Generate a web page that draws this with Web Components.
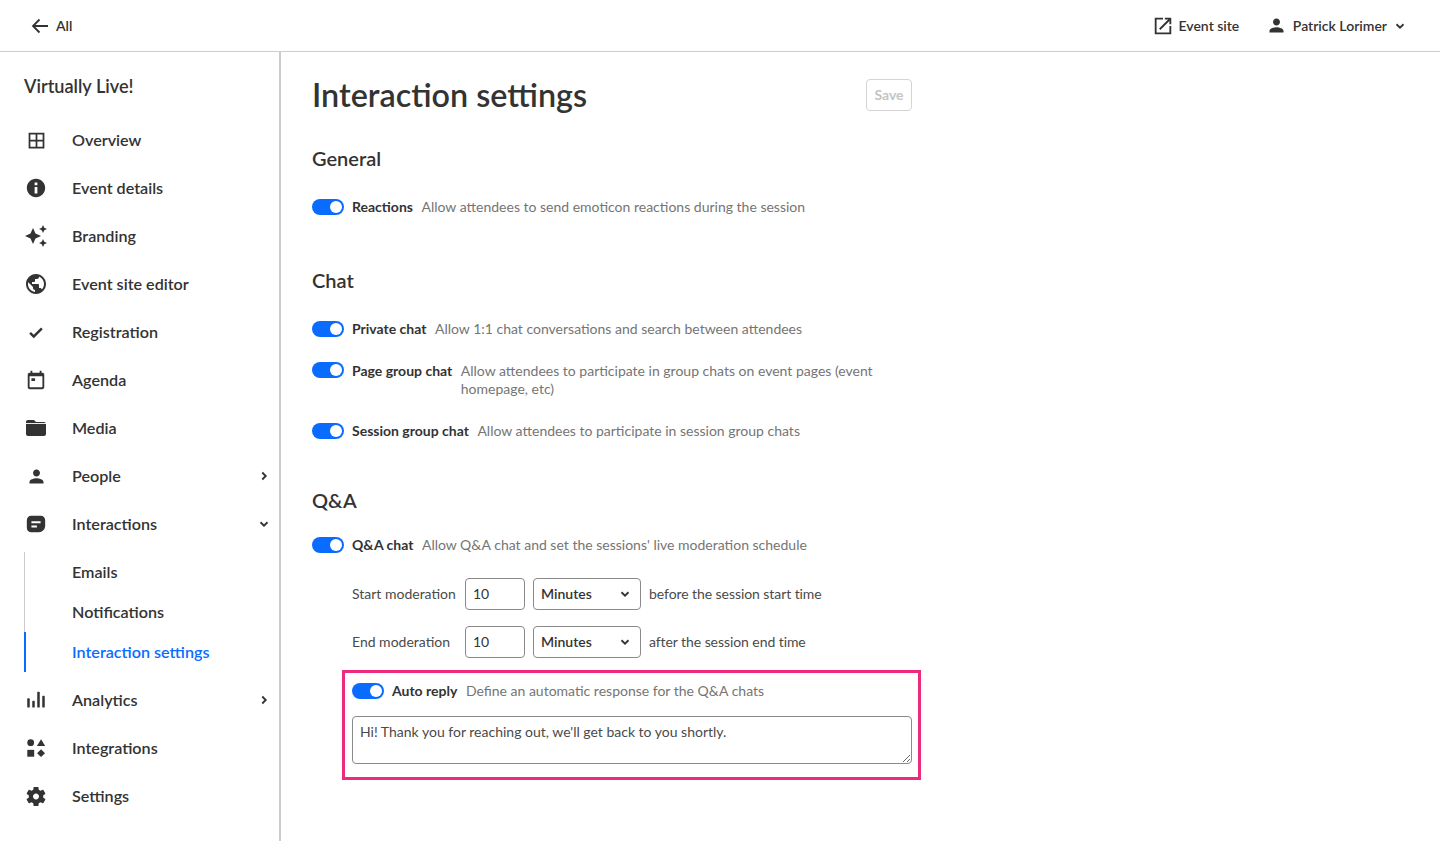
<!DOCTYPE html>
<html lang="en">
<head>
<meta charset="utf-8">
<title>Interaction settings</title>
<style>
  html, body { margin: 0; height: 100%; background: #fff; overflow: hidden; }
  body { font-family: Lato, "Open Sans", sans-serif; color: #333; }
</style>
</head>
<body>
<app-shell>
  <top-bar slot="top"></top-bar>
  <side-nav slot="side" title="Virtually Live!">
    <nav-item icon="overview">Overview</nav-item>
    <nav-item icon="info">Event details</nav-item>
    <nav-item icon="branding">Branding</nav-item>
    <nav-item icon="globe">Event site editor</nav-item>
    <nav-item icon="check">Registration</nav-item>
    <nav-item icon="agenda">Agenda</nav-item>
    <nav-item icon="media">Media</nav-item>
    <nav-item icon="person" chevron="right">People</nav-item>
    <nav-item icon="chat" chevron="down">Interactions</nav-item>
    <sub-nav>
      <sub-item>Emails</sub-item>
      <sub-item>Notifications</sub-item>
      <sub-item active>Interaction settings</sub-item>
    </sub-nav>
    <nav-item icon="analytics" chevron="right">Analytics</nav-item>
    <nav-item icon="integrations">Integrations</nav-item>
    <nav-item icon="settings">Settings</nav-item>
  </side-nav>
  <settings-page title="Interaction settings">
    <settings-section title="General" style="--after:28px">
      <toggle-row label="Reactions">Allow attendees to send emoticon reactions during the session</toggle-row>
    </settings-section>
    <settings-section title="Chat" style="--after:24px">
      <toggle-row label="Private chat">Allow 1:1 chat conversations and search between attendees</toggle-row>
      <toggle-row label="Page group chat" multi>Allow attendees to participate in group chats on event pages (event homepage, etc)</toggle-row>
      <toggle-row label="Session group chat">Allow attendees to participate in session group chats</toggle-row>
    </settings-section>
    <settings-section title="Q&amp;A" style="--head-gap:24px">
      <toggle-row label="Q&amp;A chat">Allow Q&amp;A chat and set the sessions' live moderation schedule</toggle-row>
      <moderation-row label="Start moderation" suffix="before the session start time"></moderation-row>
      <moderation-row label="End moderation" suffix="after the session end time"></moderation-row>
      <auto-reply message="Hi! Thank you for reaching out, we'll get back to you shortly."></auto-reply>
    </settings-section>
  </settings-page>
</app-shell>

<script>
const icons = {
  overview: '<path d="M3 3v18h18V3H3zm8 16H5v-6h6v6zm0-8H5V5h6v6zm8 8h-6v-6h6v6zm0-8h-6V5h6v6z"/>',
  info: '<path d="M12 2C6.48 2 2 6.48 2 12s4.48 10 10 10 10-4.48 10-10S17.52 2 12 2zm1.5 16h-3v-7h3v7zm0-9h-3V6h3v3z"/>',
  branding: '<path d="M19 9l1.25-2.75L23 5l-2.75-1.25L19 1l-1.25 2.75L15 5l2.75 1.25L19 9zm-7.5.5L9 4 6.5 9.5 1 12l5.5 2.5L9 20l2.5-5.5L17 12l-5.5-2.5zM19 15l-1.25 2.75L15 19l2.75 1.25L19 23l1.25-2.75L23 19l-2.75-1.25L19 15z"/>',
  globe: '<path d="M12 2C6.48 2 2 6.48 2 12s4.48 10 10 10 10-4.48 10-10S17.52 2 12 2zm-1 17.93c-3.95-.49-7-3.85-7-7.93 0-.62.08-1.21.21-1.79L9 15v1c0 1.1.9 2 2 2v1.93zm6.9-2.54c-.26-.81-1-1.39-1.9-1.39h-1v-3c0-.55-.45-1-1-1H8v-2h2c.55 0 1-.45 1-1V7h2c1.1 0 2-.9 2-2v-.41c2.93 1.19 5 4.06 5 7.41 0 2.08-.8 3.97-2.1 5.39z"/>',
  check: '<path d="M9 15.6L5.300 11.900 3 14.200l6 6L21 8.200l-2.300-2.300z"/>',
  agenda: '<path d="M19 4h-1V2h-2v2H8V2H6v2H5c-1.1 0-2 .9-2 2v14c0 1.1.9 2 2 2h14c1.1 0 2-.9 2-2V6c0-1.1-.9-2-2-2zm0 16H5V8h14v12zM7 10h4v3H7z"/>',
  media: '<path d="M10 4H4c-1.1 0-2 .9-2 2v12c0 1.1.9 2 2 2h16c1.1 0 2-.9 2-2V8c0-1.1-.9-2-2-2h-8l-2-2z"/><path d="M2 7.500h20" stroke="#fff" stroke-width=".9"/>',
  person: '<path d="M12 12c2.21 0 4-1.79 4-4s-1.79-4-4-4-4 1.79-4 4 1.79 4 4 4zm0 2c-2.67 0-8 1.34-8 4v2h16v-2c0-2.66-5.33-4-8-4z"/>',
  chat: '<path fill-rule="evenodd" d="M7 3h10c3 0 5 2 5 5v6c0 4-3 7-7 7H7c-3 0-5-2-5-5V8c0-3 2-5 5-5zm0 6v2.200h10V9H7zm0 4.500v2.200h6v-2.200H7z"/>',
  analytics: '<rect x="1.500" y="10" width="3" height="11" rx="1"/><rect x="7.500" y="13" width="3" height="8" rx="1"/><rect x="13.500" y="2" width="3" height="19" rx="1"/><rect x="19.500" y="7" width="3" height="14" rx="1"/>',
  integrations: '<circle cx="6.200" cy="6.200" r="3.700"/><path d="M17.500 2.500l4.500 7.300h-9z"/><rect x="2.500" y="14" width="7.500" height="7.500"/><path d="M17.500 13.300l4.300 4.300-4.300 4.300-4.300-4.300z"/>',
  settings: '<path d="M19.140 12.940c.04-.3.06-.61.06-.94 0-.32-.02-.64-.07-.94l2.030-1.580c.18-.14.23-.41.12-.61l-1.920-3.320c-.12-.22-.37-.29-.59-.22l-2.390.96c-.5-.38-1.030-.7-1.620-.94l-.36-2.540c-.04-.24-.24-.41-.48-.41h-3.840c-.24 0-.43.17-.47.41l-.36 2.540c-.59.24-1.130.57-1.620.94l-2.390-.96c-.22-.08-.47 0-.59.22L2.740 8.870c-.12.21-.08.47.12.61l2.030 1.580c-.05.3-.09.63-.09.94s.02.64.07.94l-2.030 1.580c-.18.14-.23.41-.12.61l1.920 3.320c.12.22.37.29.59.22l2.390-.96c.5.38 1.030.7 1.620.94l.36 2.540c.05.24.24.41.48.41h3.840c.24 0 .44-.17.47-.41l.36-2.540c.59-.24 1.130-.56 1.620-.94l2.390.96c.22.08.47 0 .59-.22l1.920-3.320c.12-.22.07-.47-.12-.61l-2.010-1.580zM12 15c-1.650 0-3-1.350-3-3s1.350-3 3-3 3 1.350 3 3-1.350 3-3 3z"/>',
  external: '<path d="M19 19H5V5h7V3H3v18h18v-9h-2v7zM14 3v2h3.590l-9.830 9.830 1.410 1.410L19 6.410V10h2V3h-7z"/>',
  back: '<path d="M20 12H5M11.500 5.500L5 12l6.500 6.500" fill="none" stroke="currentColor" stroke-width="1.800"/>'
};
const chevrons = {
  right: '<path d="M8.500 5l7 7-7 7" fill="none" stroke="currentColor" stroke-width="3.600"/>',
  down: '<path d="M5 8.500l7 7 7-7" fill="none" stroke="currentColor" stroke-width="3.600"/>'
};
const svg = (body, size) => `<svg width="${size}" height="${size}" viewBox="0 0 24 24" fill="currentColor" style="display:block">${body}</svg>`;

class AppShell extends HTMLElement {
  constructor() {
    super();
    this.attachShadow({ mode: 'open' }).innerHTML = `
      <style>
        :host { display: flex; flex-direction: column; height: 100vh; }
        .body { display: flex; flex: 1; min-height: 0; }
      </style>
      <slot name="top"></slot>
      <div class="body"><slot name="side"></slot><slot></slot></div>`;
  }
}

class TopBar extends HTMLElement {
  constructor() {
    super();
    this.attachShadow({ mode: 'open' }).innerHTML = `
      <style>
        :host { display: flex; align-items: center; height: 51px; border-bottom: 1px solid #ccc; font-size: 14px; font-weight: 600; color: #333; flex: none; }
        .back { display: flex; align-items: center; gap: 4px; margin-left: 28px; }
        .right { margin-left: auto; display: flex; align-items: center; margin-right: 34px; }
        .item { display: flex; align-items: center; }
        .site { gap: 5px; margin-right: 26.500px; }
        .user > svg { margin-right: 6px; }
        .caret { margin-left: 7px; }
      </style>
      <div class="item back">${svg(icons.back, 24)}<span>All</span></div>
      <div class="right">
        <div class="item site">${svg(icons.external, 22)}<span>Event site</span></div>
        <div class="item user">${svg(icons.person, 21)}<span>Patrick Lorimer</span><span class="caret">${svg(chevrons.down, 12)}</span></div>
      </div>`;
  }
}

class SideNav extends HTMLElement {
  constructor() {
    super();
    this.attachShadow({ mode: 'open' }).innerHTML = `
      <style>
        :host { display: block; width: 279px; flex: none; border-right: 2px solid #ccc; box-sizing: content-box; }
        .title { height: 64px; padding: 22px 0 0 24px; box-sizing: border-box; font-size: 18.150px; line-height: 24px; font-weight: 600; color: #333; }
      </style>
      <div class="title"></div>
      <slot></slot>`;
  }
  connectedCallback() {
    this.shadowRoot.querySelector('.title').textContent = this.getAttribute('title');
  }
}

class NavItem extends HTMLElement {
  constructor() {
    super();
    this.attachShadow({ mode: 'open' }).innerHTML = `
      <style>
        :host { display: flex; align-items: center; height: 48px; font-size: 16.150px; color: #333; }
        .icon { width: 24px; height: 24px; margin-left: 24px; margin-right: 24px; display: flex; align-items: center; justify-content: center; }
        .label { flex: 1; font-weight: 600; padding-bottom: 2px; }
        .chev { margin-right: 9px; }
      </style>
      <span class="icon"></span><span class="label"><slot></slot></span><span class="chev"></span>`;
  }
  connectedCallback() {
    const sizes = { overview: 21, info: 22, branding: 24, globe: 24, check: 18, agenda: 22, media: 24, person: 21, chat: 22, analytics: 20, integrations: 22, settings: 25 };
    const name = this.getAttribute('icon');
    this.shadowRoot.querySelector('.icon').innerHTML = svg(icons[name], sizes[name]);
    const chev = this.getAttribute('chevron');
    if (chev) this.shadowRoot.querySelector('.chev').innerHTML = svg(chevrons[chev], 12);
  }
}

class SubNav extends HTMLElement {
  constructor() {
    super();
    this.attachShadow({ mode: 'open' }).innerHTML = `
      <style>
        :host { display: block; margin: 4px 0 4px 24px; border-left: 1px solid #ccc; }
      </style>
      <slot></slot>`;
  }
}

class SubItem extends HTMLElement {
  constructor() {
    super();
    this.attachShadow({ mode: 'open' }).innerHTML = `
      <style>
        :host { display: flex; align-items: center; height: 40px; padding: 0 0 2px 46px; margin-left: -1px; font-size: 16.150px; font-weight: 600; color: #333; border-left: 2px solid transparent; box-sizing: border-box; }
        :host([active]) { color: #0a6cff; border-left-color: #0a6cff; }
      </style>
      <slot></slot>`;
  }
}

class SettingsPage extends HTMLElement {
  constructor() {
    super();
    this.attachShadow({ mode: 'open' }).innerHTML = `
      <style>
        :host { display: block; width: 600px; padding: 27px 0 0 31px; }
        .head { display: flex; align-items: center; justify-content: space-between; height: 32px; margin-bottom: 35px; }
        h1 { margin: 0; font-size: 32.300px; font-weight: 600; color: #333; line-height: 32px; }
        .save { width: 46px; height: 32px; box-sizing: border-box; border: 1px solid #d4d4d4; border-radius: 4px; background: #fff; color: #c4c4c4; font: 700 14px/28px Lato, sans-serif; padding: 0 0 1px; }
      </style>
      <div class="head"><h1></h1><button class="save">Save</button></div>
      <slot></slot>`;
  }
  connectedCallback() {
    this.shadowRoot.querySelector('h1').textContent = this.getAttribute('title');
  }
}

class SettingsSection extends HTMLElement {
  constructor() {
    super();
    this.attachShadow({ mode: 'open' }).innerHTML = `
      <style>
        :host { display: block; margin-bottom: var(--after, 0); }
        h2 { margin: 0 0 var(--head-gap, 28px); font-size: 20px; line-height: 24px; font-weight: 600; color: #333; }
        .rows { display: flex; flex-direction: column; }
      </style>
      <h2></h2><div class="rows"><slot></slot></div>`;
  }
  connectedCallback() {
    this.shadowRoot.querySelector('h2').textContent = this.getAttribute('title');
  }
}

class ToggleSwitch extends HTMLElement {
  constructor() {
    super();
    this.attachShadow({ mode: 'open' }).innerHTML = `
      <style>
        :host { display: block; width: 32px; height: 16px; border-radius: 8px; background: #0a6cff; position: relative; flex: none; }
        i { position: absolute; top: 2px; right: 2px; width: 12px; height: 12px; border-radius: 50%; background: #fff; }
      </style>
      <i></i>`;
  }
}

class ToggleRow extends HTMLElement {
  constructor() {
    super();
    this.attachShadow({ mode: 'open' }).innerHTML = `
      <style>
        :host { display: flex; align-items: flex-start; font-size: 14px; line-height: 18px; margin-bottom: 24px; }
        toggle-switch { margin: 1px 8px 0 0; }
        :host([multi]) toggle-switch { margin-top: 0; }
        .label { font-weight: 700; color: #333; margin-right: 8.500px; white-space: nowrap; }
        .desc { color: #757575; flex: 1; }
      </style>
      <toggle-switch></toggle-switch><span class="label"></span><span class="desc"><slot></slot></span>`;
  }
  connectedCallback() {
    this.shadowRoot.querySelector('.label').textContent = this.getAttribute('label');
  }
}

class ModerationRow extends HTMLElement {
  constructor() {
    super();
    this.attachShadow({ mode: 'open' }).innerHTML = `
      <style>
        :host { display: flex; align-items: center; height: 32px; margin: 0 0 16px 40px; font-size: 14px; color: #4a4a4a; }
        .label { width: 113px; padding-bottom: 2px; }
        .suffix { padding-bottom: 2px; letter-spacing: -.07px; }
        input, select { box-sizing: border-box; height: 32px; border: 1px solid #8a8a8a; border-radius: 4px; background: #fff; font: 14px Lato, sans-serif; color: #333; outline: none; }
        input { width: 60px; padding: 0 7px 2px; margin-right: 8px; }
        .sel { position: relative; width: 108px; margin-right: 8px; }
        select { width: 100%; padding: 0 7px 2px; appearance: none; font-weight: 600; }
        .sel svg { position: absolute; right: 10px; top: 10px; color: #333; }
      </style>
      <span class="label"></span>
      <input value="10">
      <span class="sel"><select><option>Minutes</option></select>${svg(chevrons.down, 12)}</span>
      <span class="suffix"></span>`;
  }
  connectedCallback() {
    this.shadowRoot.querySelector('.label').textContent = this.getAttribute('label');
    this.shadowRoot.querySelector('.suffix').textContent = this.getAttribute('suffix');
  }
}

class AutoReply extends HTMLElement {
  constructor() {
    super();
    this.attachShadow({ mode: 'open' }).innerHTML = `
      <style>
        :host { display: block; box-sizing: border-box; height: 110px; margin: -4px -9px 0 30px; padding: 9px 6px 0 7px; border: 3px solid #ec2a7e; }
        toggle-row { margin-bottom: 16px; }
        textarea { display: block; box-sizing: border-box; width: 100%; height: 48px; padding: 5px 7px; margin: 0; border: 1px solid #8a8a8a; border-radius: 4px; font: 14px/20px Lato, sans-serif; color: #4a4a4a; outline: none; }
      </style>
      <toggle-row label="Auto reply">Define an automatic response for the Q&amp;A chats</toggle-row>
      <textarea></textarea>`;
  }
  connectedCallback() {
    this.shadowRoot.querySelector('textarea').value = this.getAttribute('message');
  }
}

customElements.define('app-shell', AppShell);
customElements.define('top-bar', TopBar);
customElements.define('side-nav', SideNav);
customElements.define('nav-item', NavItem);
customElements.define('sub-nav', SubNav);
customElements.define('sub-item', SubItem);
customElements.define('settings-page', SettingsPage);
customElements.define('settings-section', SettingsSection);
customElements.define('toggle-switch', ToggleSwitch);
customElements.define('toggle-row', ToggleRow);
customElements.define('moderation-row', ModerationRow);
customElements.define('auto-reply', AutoReply);
</script>
</body>
</html>
